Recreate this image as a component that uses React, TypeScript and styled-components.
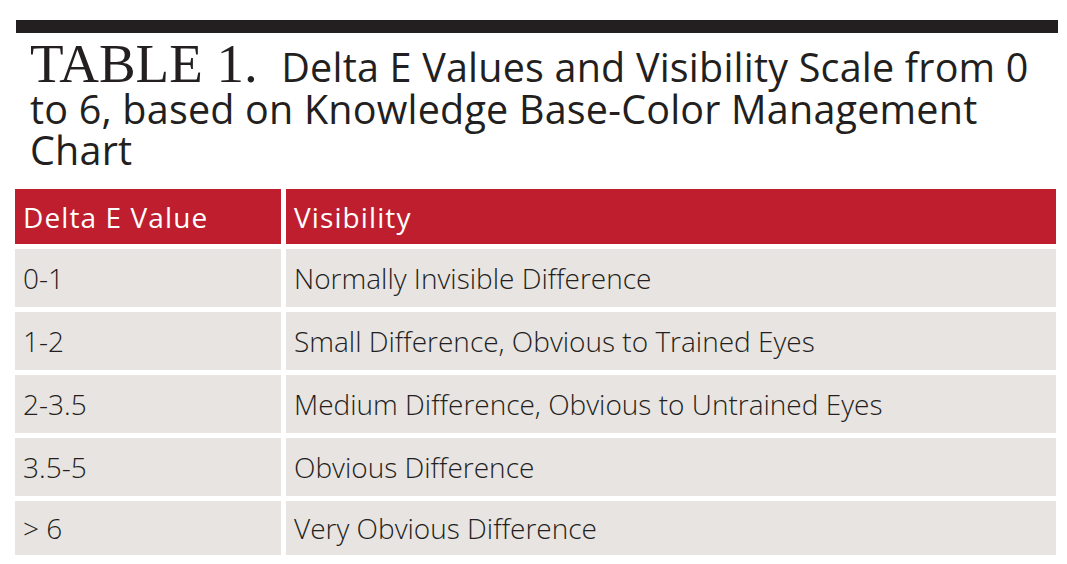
import styled, { createGlobalStyle } from 'styled-components'

const rows = [
  { value: '0-1', visibility: 'Normally Invisible Difference' },
  { value: '1-2', visibility: 'Small Difference, Obvious to Trained Eyes' },
  { value: '2-3.5', visibility: 'Medium Difference, Obvious to Untrained Eyes' },
  { value: '3.5-5', visibility: 'Obvious Difference' },
  { value: '> 6', visibility: 'Very Obvious Difference' }
]

function App() {
  return (
    <>
      <GlobalStyle />
      <Page>
        <TopRule />
        <Caption>
          <Label>TABLE 1.</Label> Delta E Values and Visibility Scale from 0
          to 6, based on Knowledge Base-Color Management Chart
        </Caption>
        <Table>
          <HeadCell>Delta E Value</HeadCell>
          <HeadCell>Visibility</HeadCell>
          {rows.map((row, i) => (
            <Row key={row.value} $last={i === rows.length - 1}>
              <Cell>{row.value}</Cell>
              <Cell>{row.visibility}</Cell>
            </Row>
          ))}
        </Table>
      </Page>
    </>
  )
}

export default App

const GlobalStyle = createGlobalStyle`
  html, body {
    margin: 0;
    background: #fff;
  }
`

const Page = styled.main`
  width: 1067px;
  height: 564px;
  padding: 20px 9px 0 15px;
  box-sizing: border-box;
  font-family: 'Open Sans', 'Liberation Sans', sans-serif;
  color: #231f20;
`

const TopRule = styled.div`
  height: 13px;
  margin-left: 1px;
  background: #231f20;
`

const Caption = styled.h1`
  margin: 0;
  padding: 10px 10px 0 15px;
  height: 156px;
  box-sizing: border-box;
  font-size: 39.5px;
  font-weight: 400;
  line-height: 41.5px;
  letter-spacing: 0.2px;
  color: #231f20;
`

const Label = styled.span`
  font-family: 'Liberation Serif', 'DejaVu Serif', serif;
  font-size: 55px;
  line-height: 41.5px;
  letter-spacing: 0;
  margin-right: 13px;
`

const Table = styled.div`
  display: grid;
  grid-template-columns: 266px 770px;
  column-gap: 5px;
  row-gap: 5px;
`

const HeadCell = styled.div`
  height: 55px;
  display: flex;
  align-items: center;
  padding-left: 8px;
  background: #be1e2d;
  color: #fff;
  font-size: 28px;
  font-weight: 400;
  letter-spacing: 1.1px;
`

const Row = styled.div<{ $last?: boolean }>`
  display: contents;

  & > div {
    height: ${p => (p.$last ? '54px' : '58px')};
  }
`

const Cell = styled.div`
  display: flex;
  align-items: center;
  padding-left: 8px;
  background: #e8e4e2;
  font-size: 28px;
  font-weight: 300;
  color: #231f20;
`
